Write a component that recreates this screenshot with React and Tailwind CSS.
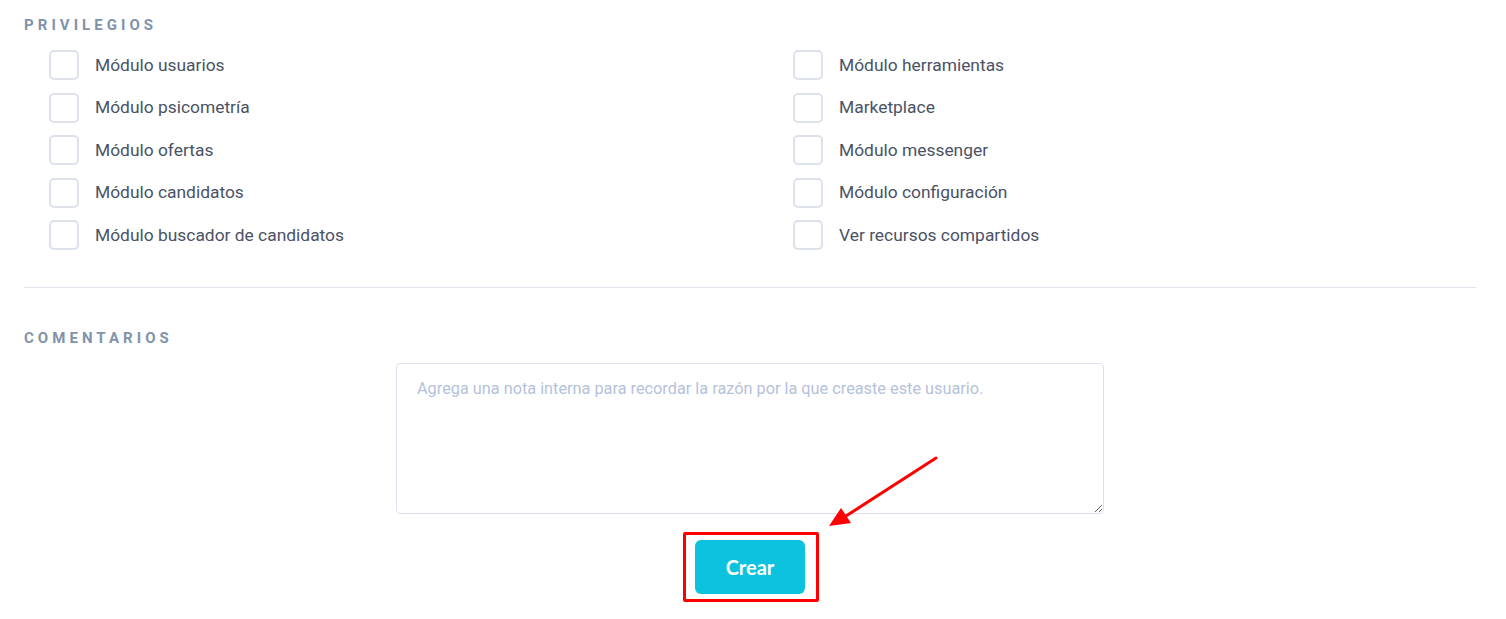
const left = [
  'Módulo usuarios',
  'Módulo psicometría',
  'Módulo ofertas',
  'Módulo candidatos',
  'Módulo buscador de candidatos',
];

const right = [
  'Módulo herramientas',
  'Marketplace',
  'Módulo messenger',
  'Módulo configuración',
  'Ver recursos compartidos',
];

function Check({ label }) {
  return (
    <label className="flex items-center h-[30px]">
      <span className="w-[30px] h-[30px] rounded-[5px] border-2 border-[#dde1ec] bg-white shrink-0" />
      <span className="ml-[16px] text-[17.4px] text-[#4a5266]">{label}</span>
    </label>
  );
}

export default function App() {
  return (
    <div className="relative min-h-[619px] bg-white font-['Roboto',sans-serif]">
      <div className="pl-[24px] pr-[30px] pt-[15px]">
        <h3 className="text-[15px] leading-[20px] font-bold tracking-[0.27em] text-[#7f93ab]">PRIVILEGIOS</h3>
        <div className="mt-[15px] pl-[25px] grid grid-cols-[744px_1fr]">
          <div className="flex flex-col gap-[12.5px]">
            {left.map((l) => (
              <Check key={l} label={l} />
            ))}
          </div>
          <div className="flex flex-col gap-[12.5px]">
            {right.map((l) => (
              <Check key={l} label={l} />
            ))}
          </div>
        </div>
        <div className="mt-[37px] border-t border-[#e1e4ec]" />
        <h3 className="mt-[40px] text-[15px] leading-[20px] font-bold tracking-[0.27em] text-[#7f93ab]">COMENTARIOS</h3>
        <div className="mt-[15px] flex flex-col items-center">
          <textarea
            className="w-[708px] h-[151px] rounded-[4px] border border-[#dde1ec] px-[20px] py-[13px] text-[16.3px] leading-[24px] text-[#4a5266] placeholder:text-[#b5c2da] outline-none"
            placeholder="Agrega una nota interna para recordar la razón por la que creaste este usuario."
          />
          <div className="relative mt-[26px]">
            <button className="w-[110px] h-[54px] rounded-[6px] bg-[#0bc3de] text-white text-[20px] leading-[24px] font-bold font-['Lato',sans-serif]">
              Crear
            </button>
            <div className="absolute left-[-12px] top-[-8px] w-[136px] h-[70px] border-[3px] border-[#ff0000] rounded-[2px] pointer-events-none" />
          </div>
        </div>
      </div>
      <svg className="absolute left-0 top-0 pointer-events-none" width="1506" height="619">
        <line x1="936" y1="458" x2="846" y2="516" stroke="#ff0000" strokeWidth="3" strokeLinecap="round" />
        <polygon points="829,526 841,508 851,523" fill="#ff0000" />
      </svg>
    </div>
  );
}
